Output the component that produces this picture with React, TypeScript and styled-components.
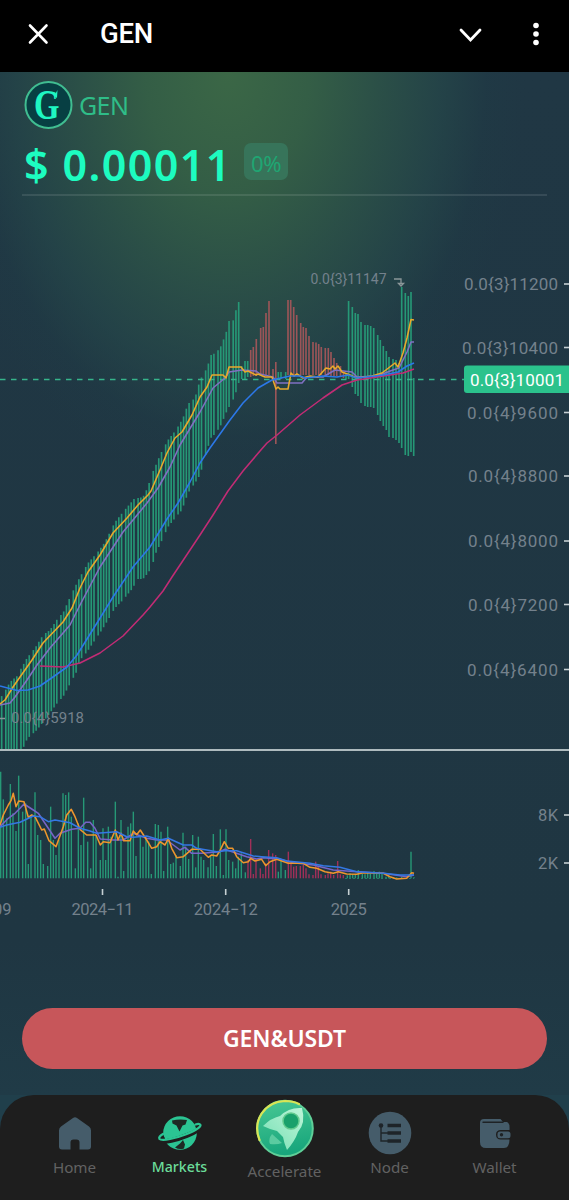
import React from "react";
import styled, { createGlobalStyle } from "styled-components";

const GlobalStyle = createGlobalStyle`
  * { box-sizing: border-box; }
  body { margin: 0; background: #1f3642; }
  button { border: 0; background: none; padding: 0; font: inherit; }
`;

const Page = styled.div`
  display: flex;
  flex-direction: column;
  width: 569px;
  height: 1200px;
  overflow: hidden;
  font-family: "Noto Sans", "Liberation Sans", sans-serif;
  background: #1f3642;
`;

const TopBar = styled.header`
  display: flex;
  align-items: center;
  flex: 0 0 72px;
  padding: 0 29px 5px 27px;
  background: #000;
  color: #fff;
`;

const BarTitle = styled.h1`
  flex: 1;
  margin: 0 0 0 50px;
  font: 500 27.5px/1 Roboto, sans-serif;
  letter-spacing: -0.3px;
`;

const IconButton = styled.button<{ $gap?: number }>`
  display: flex;
  color: inherit;
  margin-left: ${(p) => p.$gap ?? 0}px;
`;

const Main = styled.main`
  display: flex;
  flex-direction: column;
  flex: 1;
  background:
    radial-gradient(ellipse 275px 390px at 228px 0px, #3b6746 0%, rgba(54, 98, 70, 0.9) 30%, rgba(46, 86, 72, 0.78) 55%, rgba(38, 74, 74, 0.6) 78%, rgba(31, 62, 70, 0.25) 94%, rgba(31, 56, 67, 0) 108%),
    linear-gradient(#203744 0%, #1f3642 85%, #203b47 100%);
`;

const Token = styled.section`
  display: flex;
  flex-direction: column;
  height: 124px;
  margin: 0 22px;
  padding: 9px 0 0 2px;
  border-bottom: 2px solid rgba(255, 255, 255, 0.1);
`;

const TokenName = styled.div`
  display: flex;
  align-items: center;
  gap: 6px;
  height: 48px;
  color: #2fbd88;
  font-size: 25px;
  letter-spacing: -0.6px;
  line-height: 44px;
`;

const PriceRow = styled.div`
  display: flex;
  align-items: center;
  gap: 13px;
  height: 72px;
`;

const Price = styled.span`
  width: 207px;
  padding-top: 5px;
  white-space: nowrap;
  font-weight: 600;
  font-size: 43px;
  line-height: 1;
  letter-spacing: 1.4px;
  color: #1dfcc0;
`;

const Change = styled.span`
  display: grid;
  place-items: center;
  width: 44px;
  height: 37px;
  padding-top: 2px;
  border-radius: 7px;
  background: #37745a;
  color: #1fa673;
  font-size: 22px;
  letter-spacing: -0.5px;
`;

const ChartSvg = styled.svg`
  display: block;
  flex: 0 0 740px;
  width: 569px;
  height: 740px;
  font-family: Roboto, sans-serif;
`;

const Actions = styled.div`
  padding: 72px 22px 0;
`;

const PairButton = styled.button`
  width: 525px;
  height: 61px;
  border-radius: 31px;
  background: #c7565a;
  color: #fff;
  font-weight: 600;
  font-size: 23px;
  line-height: 58px;
  padding-bottom: 1px;
  letter-spacing: -0.1px;
`;

const NavWrap = styled.div`
  flex: 0 0 105px;
  background: #203f4b;
`;

const Nav = styled.nav`
  display: flex;
  height: 105px;
  padding: 0 22px;
  border-radius: 34px 34px 0 0;
  background: #1e1e1e;
`;

const NavItem = styled.a<{ $active?: boolean; $raised?: boolean }>`
  display: flex;
  flex-direction: column;
  align-items: center;
  flex: 1 1 0;
  min-width: 0;
  padding-top: ${(p) => (p.$raised ? 4 : 15)}px;
  gap: ${(p) => (p.$raised ? 3 : 1)}px;
  color: ${(p) => (p.$active ? "#6bdc9a" : "#626262")};
  font-size: ${(p) => (p.$active ? 14.2 : 15.2)}px;
  line-height: 20px;
  font-weight: ${(p) => (p.$active ? 500 : 400)};
`;

type Pt = [number, number];

const at = (pts: Pt[], x: number) => {
  if (x <= pts[0][0]) return pts[0][1];
  for (let i = 1; i < pts.length; i++) {
    if (x <= pts[i][0]) {
      const [x0, y0] = pts[i - 1];
      const [x1, y1] = pts[i];
      return y0 + ((y1 - y0) * (x - x0)) / (x1 - x0);
    }
  }
  return pts[pts.length - 1][1];
};

const path = (pts: Pt[]) => "M" + pts.map((p) => p.join(" ")).join("L");

const riseTop: Pt[] = [[1, 697], [4, 693], [10, 682], [17, 676], [27, 658], [35, 648], [43, 635], [50, 630], [58, 618], [63, 613], [71, 595], [80, 577], [88, 563], [97, 553], [105, 542], [115, 522], [123, 512], [134, 499], [143, 497], [148, 487], [151, 476], [155, 467], [161, 453], [168, 440], [176, 430], [183, 418], [188, 404], [195, 398], [200, 380], [207, 368], [211, 355], [216, 353], [221, 346], [226, 333], [229, 321], [233, 321], [236, 310], [238.7, 302]];
const riseBottom: Pt[] = [[1, 749], [23, 749], [25, 743], [28, 738], [37, 730], [50, 713], [58, 702], [63, 697], [71, 682], [76, 673], [80, 660], [87, 652], [93, 643], [102, 630], [108, 620], [115, 608], [123, 600], [133, 588], [137, 579], [143, 579], [148, 573], [152, 567], [155, 555], [163, 538], [168, 527], [176, 517], [182, 510], [188, 493], [195, 483], [200, 475], [207, 450], [211, 438], [216, 433], [221, 425], [226, 413], [229, 407], [233, 400], [236, 392], [239, 382]];

const UNIT = 1.378;
const riseBars = Array.from({ length: 136 }, (_, k) => 413.7 - Math.floor(k * 2.232 + 0.1) * UNIT)
  .filter((x) => x < 239.5)
  .map((x) => [x, at(riseTop, x), at(riseBottom, x)]);

/* x, high, low, falling */
const lateBars: [number, number, number, boolean?][] = [
  [241.7, 366, 379], [245, 361, 379], [247.7, 361, 377],
  [250.7, 350, 377, true], [253.3, 347, 376, true], [256.3, 339, 376, true], [260.7, 328, 375, true], [263.3, 327, 375, true], [266, 313, 375, true], [269, 301, 375, true], [273, 369, 377, true], [275.8, 362, 444, true],
  [278.3, 372, 379], [281, 372, 379], [285.7, 372, 379],
  [288, 300, 375, true], [290.7, 300, 375, true], [293.7, 307, 375, true], [296.7, 315, 375, true], [300.7, 323, 375, true], [303.3, 327, 375, true], [306, 328, 375, true], [309, 336, 375, true], [313, 342, 375, true], [316, 342.5, 375, true], [318.7, 344, 375, true], [321.3, 347, 375, true], [325.3, 348, 375, true], [328.3, 348, 375, true], [331, 352, 376, true], [334, 358, 376, true], [336.7, 363, 376, true], [340.5, 366, 376, true], [343.5, 372, 378, true], [346, 374, 379],
  [348.6, 301, 379], [352.3, 307, 387], [355.3, 313, 394], [358, 314, 396], [361, 322, 403], [365, 325, 406], [367.7, 325, 407], [370.7, 326, 407], [373.7, 328, 408], [377.7, 335, 415], [380.3, 340, 421], [383.3, 346, 426], [386.3, 351, 430], [389, 357, 437], [393, 359, 438], [396, 360, 440], [399, 363, 443], [401.7, 287, 448], [405.3, 293, 455], [408.3, 296, 456], [411, 292, 452], [413.7, 378, 456],
];

const ma5: Pt[] = [[0, 704], [5, 700], [13, 687], [20, 677], [32, 660], [43, 643], [63, 622], [72, 608], [80, 588], [88, 572], [100, 555], [113, 533], [127, 518], [138, 505], [148, 495], [151, 491], [160, 470], [167, 453], [175, 438], [182, 432], [192, 415], [200, 397], [207, 387], [212, 375], [223, 375], [226, 378], [229, 367], [241, 367], [245, 372], [248, 371], [256, 375], [258, 374], [265, 377], [272, 377], [276, 389], [278, 387], [280, 389], [288, 389], [291, 373], [294, 376], [297, 374], [303, 378], [310, 376], [318, 377], [326, 368], [330, 369], [333, 366], [335, 369], [338, 366], [342, 372], [350, 375], [357, 378], [372, 376], [382, 373], [395, 363], [398, 367], [403, 353], [407, 338], [411, 319.5], [414, 320]];
const ma10: Pt[] = [[0, 705], [10, 703], [15, 697], [27, 680], [37, 665], [50, 648], [70, 625], [80, 605], [100, 567], [123, 532], [133, 520], [147, 503], [158, 488], [170, 467], [180, 445], [200, 412], [213, 388], [225, 378], [229, 372], [242, 370], [256, 371], [260, 374], [273, 377], [277, 383], [302, 383], [307, 377], [323, 377], [335, 370], [352, 372], [357, 377], [377, 376], [393, 370], [399, 368], [407, 352], [411, 342], [414, 342]];
const ma30: Pt[] = [[0, 686], [17, 690.5], [28, 690], [40, 686], [53, 677], [67, 667], [77, 655], [97, 623], [113, 597], [133, 567], [150, 547], [167, 519], [178, 503], [190, 482], [200, 463], [210, 448], [230, 420], [243, 403], [258, 388], [272, 380], [290, 376], [300, 376], [305, 378], [323, 376], [337, 377], [348, 375], [357, 378], [383, 375], [398, 372], [407, 366], [414, 363]];
const ma60: Pt[] = [[40, 666], [63, 667], [80, 663], [100, 653], [123, 636], [143, 615], [150, 607], [163, 591], [172, 577], [190, 550], [200, 535], [213, 515], [228, 491], [243, 471], [260, 451], [267, 443], [277, 435], [300, 415], [323, 398], [342, 385], [357, 380], [377, 377], [403, 373], [414, 369]];

/* Volume data is stored at three units per pixel, from the pane's origin (0, 760). */
const volumeBars = "2:35 10:118 20:175 31:72 39:160 48:213 56:47 68:155 77:130 85:312 93:165 105:97 113:225 122:240 130:312 143:318 152:140 160:240 168:285 177:240 189:100 197:105 206:97 214:170 226:325 235:190 243:255 251:113 263:245 272:325 280:180 288:225 301:300 309:205 317:300 325:200 333:230 346:125 354:350 363:180 371:333 384:200 392:190 400:155 408:288 421:230 429:260 438:235 446:245 454:342 466:192 475:195 483:215 491:333 503:200 512:312 520:308 528:285 541:318 549:218 557:260 566:297 578:225 587:322 595:230 603:290 611:300 624:322 632:290 640:222 649:318 661:208 670:345 678:208 686:300 698:305 707:325 715:290 724:280 736:337 744:300r 752:237r 760:342r 768:298r 781:325r 789:342r 797:310r 806:270r 818:280r 827:285r 835:335 843:300 856:330 865:275r 873:310r 881:320r 889:318r 901:318r 910:315r 918:325r 927:343r 939:345r 947:305r 955:318r 963:343r 976:345r 984:340r 992:335r 1001:345r 1013:303r 1021:343r 1030:345r 1042:346 1050:340 1058:343 1066:342 1075:330 1087:342 1095:343 1103:337 1111:342 1122:333 1130:340 1138:335 1146:342 1158:350 1166:350 1180:352 1190:352 1205:350 1233:275 1242:352"
  .split(" ")
  .map((s) => {
    const [x, y] = s.split(":");
    return { x: +x / 3, y: 760 + parseInt(y) / 3, down: y.endsWith("r") };
  });

const vol = (s: string): Pt[] => s.split(" ").map((p) => {
  const [x, y] = p.split(",").map(Number);
  return [+(x / 3).toFixed(1), +(760 + y / 3).toFixed(1)];
});

const vol5 = vol("0,195 10,165 25,135 33,122 40,100 48,140 56,123 72,125 85,172 95,165 105,170 125,210 133,207 147,242 168,260 190,200 200,165 214,148 225,170 240,208 260,225 288,225 301,255 310,245 330,248 346,210 354,240 363,220 371,242 390,242 400,213 410,224 421,210 440,240 455,265 470,260 480,245 495,255 505,235 515,265 530,293 550,290 575,268 600,268 625,292 635,285 650,288 660,272 673,245 685,265 698,265 710,290 730,308 745,305 752,295 765,303 785,298 797,317 810,305 830,298 865,310 910,310 930,322 950,325 975,335 1000,340 1015,335 1040,342 1070,343 1090,338 1150,340 1170,350 1190,357 1220,355 1235,338 1242,340");
const vol10 = vol("0,200 25,175 45,160 60,145 72,132 100,150 115,160 145,205 165,235 180,220 215,208 240,205 257,187 270,187 285,205 301,237 340,240 370,240 400,220 440,235 470,240 500,240 540,270 555,262 575,280 605,280 660,275 675,268 705,278 740,290 770,297 790,293 840,298 880,308 940,315 1000,330 1070,335 1150,340 1220,350 1242,345");
const vol30 = vol("0,202 20,195 60,187 100,168 120,170 145,185 165,180 210,188 240,205 270,213 290,220 350,215 380,230 400,232 440,228 480,240 505,235 550,255 575,255 590,265 650,275 675,272 710,272 760,288 785,290 830,293 860,303 930,310 970,317 1020,322 1070,335 1150,340 1200,345 1242,345");

const GREEN = "#269876";
const MUTED = "#74818c";

const priceTicks: [string, number, number][] = [
  ["0.0{3}11200", 284, 464], ["0.0{3}10400", 347.5, 462], ["0.0{4}9600", 412.5, 467], ["0.0{4}8800", 476, 468], ["0.0{4}8000", 541, 468], ["0.0{4}7200", 604.5, 468], ["0.0{4}6400", 669.5, 467],
];
const volumeTicks: [string, number][] = [["8K", 815], ["2K", 863]];
const dateTicks: [string, number, number][] = [["2024−11", 102.5, 62], ["2024−12", 225.7, 64], ["2025", 348.7, 36]];

const lines = (ma: [Pt[], string][]) =>
  ma.map(([pts, color]) => <path key={color} d={path(pts)} fill="none" stroke={color} strokeWidth="1.55" strokeLinejoin="round" />);

function Chart() {
  return (
    <ChartSvg viewBox="0 196 569 740">
      <g stroke={GREEN} strokeWidth="1.65">
        {riseBars.map(([x, y1, y2]) => <line key={x} x1={x} x2={x} y1={y1} y2={y2} />)}
        {lateBars.map(([x, y1, y2, down]) => (
          <line key={x} x1={x} x2={x} y1={y1} y2={y2} stroke={down ? "#9b5558" : GREEN} />
        ))}
      </g>
      <path d="M0 379.5H464" stroke="#36b58b" strokeWidth="1.4" strokeDasharray="5.5 5.5" />
      {lines([[ma10, "#8070c2"], [ma5, "#e9a92c"], [ma60, "#c22c75"], [ma30, "#2c78e8"]])}

      <g fill={MUTED} fontSize="14.3">
        <text x="310.5" y="283.5" textLength="76" lengthAdjust="spacingAndGlyphs">{"0.0{3}11147"}</text>
        <text x="11" y="723" textLength="73" lengthAdjust="spacingAndGlyphs">{"0.0{4}5918"}</text>
      </g>
      <path d="M394 279H401V284M398.5 283.5H403.5L401 286ZM0 718.5H5" fill="none" stroke="#8b9699" strokeWidth="1.3" />

      <g fill={MUTED} fontSize="17">
        {priceTicks.map(([label, y, x]) => <text key={label} x={x} y={y + 6} textLength={558 - x}>{label}</text>)}
        {volumeTicks.map(([label, y]) => <text key={label} x="538" y={y + 5.5} fontSize="16.5" textLength="20">{label}</text>)}
        {dateTicks.map(([label, x, w]) => <text key={label} x={x - w / 2} y="914.5" fontSize="16.5" textLength={w}>{label}</text>)}
        <text x="-7" y="914.5" fontSize="16.5">09</text>
      </g>
      <g stroke="#c6d0d3" strokeWidth="1.6">
        {[...priceTicks, ...volumeTicks].map(([label, y]) => <path key={label} d={`M564 ${y}H569`} />)}
        {dateTicks.map(([label, x]) => <path key={label} d={`M${x} 889V895`} />)}
      </g>

      <rect x="464" y="365.5" width="108" height="27.5" rx="3" fill="#2bc28c" />
      <text x="470" y="385.5" fill="#fff" fontSize="17" textLength="94">{"0.0{3}10001"}</text>

      <path d="M0 750H569" stroke="#dfe8e8" strokeWidth="1.3" />

      {volumeBars.map((b, i) => (
        <line key={i} x1={b.x} x2={b.x} y1={b.y} y2="878.3" stroke={b.down ? "#a12f58" : GREEN} strokeWidth="1.4" />
      ))}
      <path d="M345 878.5H414" stroke="#268c70" strokeWidth="0.8" strokeDasharray="2 2" />
      {lines([[vol10, "#7664c6"], [vol5, "#ee962d"], [vol30, "#3478e4"]])}
    </ChartSvg>
  );
}

const GenLogo = () => (
  <svg width="49" height="48" viewBox="0 0 49 48">
    <circle cx="24.5" cy="24" r="23" fill="#073f43" stroke="#40bd91" strokeWidth="2" />
    <text x="22.5" y="38" textAnchor="middle" fontFamily="Liberation Serif, serif" fontWeight="700" fontSize="42" textLength="25" lengthAdjust="spacingAndGlyphs" fill="#1ff6c2">G</text>
    <path d="M33.5 9Q32.5 12.5 29 14L33 17Z" fill="#1ff6c2" />
  </svg>
);

const HomeIcon = () => (
  <svg width="42" height="46" viewBox="54 1110 42 46">
    <path d="M73 1118q2-1.6 4 0l12 8.5q2 1.5 2 4v16q0 3-3 3h-8.5v-7q0-3-3-3h-3q-3 0-3 3v7H62q-3 0-3-3v-16q0-2.5 2-4z" fill="#455c6a" />
  </svg>
);

const MarketsIcon = () => (
  <svg width="46" height="46" viewBox="157 1110 46 46">
    <circle cx="180" cy="1133" r="16.8" fill="#2bc493" />
    <path d="M172 1120.500q7-1.5 15-.5l-1.5 4.5-3 1-3 6-3-6-4-2zM175 1147.500l5-4 3-3.5 2 4.5-1 4q-5 1.5-9-1z" fill="#1e2924" />
    <path d="M164 1136.500q-5 3-3 4.5c3 2 16-1.5 26-5.5 9-3.5 14-7 13.5-9-.8-1.5-3-1-5-.5" fill="none" stroke="#1e1e1e" strokeWidth="4.6" />
    <path d="M163 1134q-5 3-3.5 5c2.5 2.5 17-1 26-4.5s15.500-7.5 15-9.5c-.8-1.5-3.5-1-5-.5" fill="none" stroke="#2bc493" strokeWidth="2.2" strokeLinecap="round" />
  </svg>
);

const RocketIcon = () => (
  <svg width="60" height="59" viewBox="0 0 60 59">
    <defs>
      <linearGradient id="disc" x1="0" y1="0" x2="0.2" y2="1">
        <stop stopColor="#49c894" /><stop offset="1" stopColor="#18a67c" />
      </linearGradient>
      <linearGradient id="ship" x1="0" y1="1" x2="1" y2="0">
        <stop stopColor="#76dfb4" /><stop offset="1" stopColor="#bdf5d8" />
      </linearGradient>
    </defs>
    <circle cx="30" cy="29.5" r="27.8" fill="url(#disc)" stroke="#5fcf98" strokeWidth="2" />
    <path d="M4.5 41C-3 22 9 3 30 2q8 0 14 3" fill="none" stroke="#d9e454" strokeWidth="2.2" strokeLinecap="round" />
    <path d="M17 35L27 44Q22 46 15 45Q13 40 17 35Z" fill="#5bcba0" />
    <path d="M47 9Q51 24 43 33Q40 42 32 51Q29 44 28 38L22 32Q14 30 8 27Q16 19 25 17Q34 8 47 9Z" fill="url(#ship)" />
    <circle cx="36" cy="22" r="8" fill="#19a06b" stroke="#62ca8d" strokeWidth="1.5" />
  </svg>
);

const NodeIcon = () => (
  <svg width="46" height="46" viewBox="0 0 46 46">
    <circle cx="23" cy="23" r="21.3" fill="#455c6a" />
    <circle cx="14" cy="15.5" r="2.3" fill="#1e2429" />
    <path d="M14 16V31H21M14 23H21" fill="none" stroke="#1e2429" strokeWidth="1.4" />
    <path d="M20.5 15.5H34M20.5 23H34M20.5 31H34" stroke="#1e2429" strokeWidth="3.6" />
  </svg>
);

const WalletIcon = () => (
  <svg width="46" height="46" viewBox="0 0 46 46">
    <path d="M8 13Q8 9 12 9H28.5L31 12H35Q38 13 37.5 20H29Q24 20 24 24.5Q24 29.5 29 29.5H37.5Q37.5 34 36 36Q35 38 32 38H14Q8 38 8 32Z" fill="#455c6a" />
    <path d="M11 12.3H31" stroke="#1e2225" strokeWidth="1.4" strokeLinecap="round" />
    <rect x="25.5" y="21.5" width="13" height="6.7" rx="2.5" fill="#455c6a" />
    <circle cx="29.5" cy="24.8" r="1.7" fill="#1e2225" />
  </svg>
);

export default function App() {
  return (
    <>
      <GlobalStyle />
      <Page>
        <TopBar>
          <IconButton aria-label="Close">
            <svg width="23" height="22" viewBox="0 0 23 22">
              <path d="M3 2.5L19.5 19.5M19.5 2.5L3 19.5" stroke="currentColor" strokeWidth="2.6" strokeLinecap="round" />
            </svg>
          </IconButton>
          <BarTitle>GEN</BarTitle>
          <IconButton aria-label="Minimize">
            <svg width="24" height="22" viewBox="0 0 24 22">
              <path d="M3 7L12.5 17L22 7" fill="none" stroke="currentColor" strokeWidth="2.8" strokeLinecap="round" />
            </svg>
          </IconButton>
          <IconButton aria-label="Menu" $gap={50}>
            <svg width="8" height="24" viewBox="0 0 8 24">
              <g fill="currentColor"><circle cx="4" cy="3.5" r="2.8" /><circle cx="4" cy="12" r="2.8" /><circle cx="4" cy="20.5" r="2.8" /></g>
            </svg>
          </IconButton>
        </TopBar>
        <Main>
          <Token>
            <TokenName><GenLogo />GEN</TokenName>
            <PriceRow>
              <Price>$ 0.00011</Price>
              <Change>0%</Change>
            </PriceRow>
          </Token>
          <Chart />
          <Actions>
            <PairButton>GEN&amp;USDT</PairButton>
          </Actions>
        </Main>
        <NavWrap>
          <Nav>
            <NavItem><HomeIcon />Home</NavItem>
            <NavItem $active><MarketsIcon />Markets</NavItem>
            <NavItem $raised><RocketIcon />Accelerate</NavItem>
            <NavItem><NodeIcon />Node</NavItem>
            <NavItem><WalletIcon />Wallet</NavItem>
          </Nav>
        </NavWrap>
      </Page>
    </>
  );
}
